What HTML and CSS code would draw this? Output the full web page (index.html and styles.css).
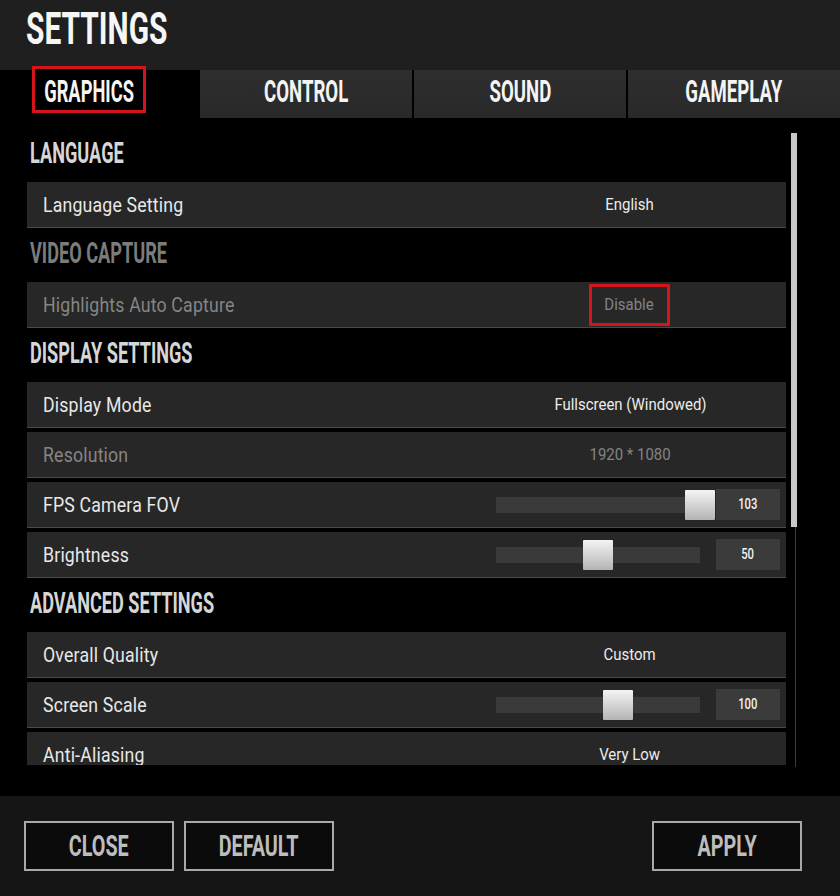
FILE: index.html
```html
<!DOCTYPE html>
<html lang="en">
<head>
<meta charset="utf-8">
<title>Settings</title>
<link rel="stylesheet" href="styles.css">
</head>
<body>
<div class="app">
  <header class="topbar">
    <h1 class="title"><span class="cond">SETTINGS</span></h1>
  </header>

  <nav class="tabs">
    <div class="tab-slot">
      <div class="tab-active"><span class="cond">GRAPHICS</span></div>
    </div>
    <div class="tab"><span class="cond">CONTROL</span></div>
    <div class="tab"><span class="cond">SOUND</span></div>
    <div class="tab"><span class="cond">GAMEPLAY</span></div>
  </nav>

  <main class="content">
    <div class="list">
      <section class="section">
        <h2 class="sec-title"><span class="cond">LANGUAGE</span></h2>
        <div class="row">
          <span class="label"><span class="label-text">Language Setting</span></span>
          <span class="value"><span class="val-text">English</span></span>
        </div>
      </section>

      <section class="section disabled">
        <h2 class="sec-title"><span class="cond">VIDEO CAPTURE</span></h2>
        <div class="row">
          <span class="label"><span class="label-text">Highlights Auto Capture</span></span>
          <span class="value"><span class="highlight"><span class="val-text">Disable</span></span></span>
        </div>
      </section>

      <section class="section">
        <h2 class="sec-title"><span class="cond">DISPLAY SETTINGS</span></h2>
        <div class="row">
          <span class="label"><span class="label-text">Display Mode</span></span>
          <span class="value"><span class="val-text">Fullscreen (Windowed)</span></span>
        </div>
        <div class="row disabled">
          <span class="label"><span class="label-text">Resolution</span></span>
          <span class="value"><span class="val-text">1920 * 1080</span></span>
        </div>
        <div class="row">
          <span class="label"><span class="label-text">FPS Camera FOV</span></span>
          <span class="value slider">
            <span class="track"><span class="thumb" style="left:100%"></span></span>
            <span class="num"><span class="num-text">103</span></span>
          </span>
        </div>
        <div class="row">
          <span class="label"><span class="label-text">Brightness</span></span>
          <span class="value slider">
            <span class="track"><span class="thumb" style="left:50%"></span></span>
            <span class="num"><span class="num-text">50</span></span>
          </span>
        </div>
      </section>

      <section class="section">
        <h2 class="sec-title"><span class="cond">ADVANCED SETTINGS</span></h2>
        <div class="row">
          <span class="label"><span class="label-text">Overall Quality</span></span>
          <span class="value"><span class="val-text">Custom</span></span>
        </div>
        <div class="row">
          <span class="label"><span class="label-text">Screen Scale</span></span>
          <span class="value slider">
            <span class="track"><span class="thumb" style="left:60%"></span></span>
            <span class="num"><span class="num-text">100</span></span>
          </span>
        </div>
        <div class="row">
          <span class="label"><span class="label-text">Anti-Aliasing</span></span>
          <span class="value"><span class="val-text">Very Low</span></span>
        </div>
      </section>
    </div>

    <div class="scrollbar">
      <div class="scroll-thumb"></div>
      <div class="scroll-track"></div>
    </div>
  </main>

  <footer class="footer">
    <button class="btn"><span class="cond">CLOSE</span></button>
    <button class="btn"><span class="cond">DEFAULT</span></button>
    <button class="btn btn-apply"><span class="cond">APPLY</span></button>
  </footer>
</div>
</body>
</html>
```

FILE: styles.css
```css
* { box-sizing: border-box; }

html, body {
  margin: 0;
  padding: 0;
  background: #000;
}

body {
  width: 840px;
  height: 896px;
  overflow: hidden;
  font-family: Roboto, "Liberation Sans", sans-serif;
  color: #e6e6e6;
}

.app {
  display: flex;
  flex-direction: column;
  height: 896px;
}

.cond {
  display: inline-block;
  font-family: Roboto, "Liberation Sans", sans-serif;
  font-weight: 700;
  transform: scaleX(0.6);
  white-space: nowrap;
}

/* ---------- top bar ---------- */
.topbar {
  height: 70px;
  background: #1f1f1f;
  padding: 7px 0 0 26px;
}

.title {
  margin: 0;
  font-size: 44px;
  line-height: 44px;
  color: #f6f6f6;
  font-weight: 700;
}

.title .cond {
  transform-origin: left center;
  transform: scaleX(0.68);
}

/* ---------- tabs ---------- */
.tabs {
  height: 48px;
  display: grid;
  grid-template-columns: 198px repeat(3, 1fr);
  gap: 2px;
  background: #000;
}

.tab-slot {
  padding-left: 32px;
}

.tab-active {
  width: 114px;
  height: 47px;
  margin-top: -4px;
  border: 3px solid #d4161b;
  background: #000;
  display: flex;
  justify-content: center;
  font-size: 31px;
  line-height: 31px;
  padding-top: 7px;
  color: #f6f6f6;
}

.tab-active .cond { transform: scaleX(0.59); }

.tab {
  background: linear-gradient(#2e2e2e, #292929);
  display: flex;
  justify-content: center;
  font-size: 31px;
  line-height: 31px;
  padding-top: 6px;
  color: #f4f4f4;
}

/* ---------- content ---------- */
.content {
  flex: 1;
  display: flex;
  padding-top: 14px;
  background: #000;
}

.list {
  width: 759px;
  height: 633px;
  margin-left: 27px;
  overflow: hidden;
  display: flex;
  flex-direction: column;
  gap: 4px;
}

.section {
  display: flex;
  flex-direction: column;
  gap: 4px;
}

.sec-title {
  margin: 0 0 -4px 0;
  height: 50px;
  padding: 6px 0 0 3px;
  font-size: 29.5px;
  line-height: 30px;
  color: #d6d6d6;
}

.sec-title .cond {
  transform-origin: left center;
  transform: scaleX(0.615);
}

.section.disabled .sec-title { color: #7c7c7c; }

.row {
  flex: none;
  height: 46px;
  background: #272727;
  border-bottom: 1px solid #4b4b4b;
  display: grid;
  grid-template-columns: 1fr 312px;
  align-items: center;
  padding-left: 16px;
}

.label {
  font-size: 20px;
  line-height: 20px;
  color: #e8e8e8;
}

.label-text {
  display: inline-block;
  transform: scaleX(0.885);
  transform-origin: left center;
  white-space: nowrap;
  letter-spacing: 0.2px;
}

.value {
  text-align: center;
  font-size: 17px;
  line-height: 17px;
  color: #ececec;
}

.val-text {
  display: inline-block;
  transform: scaleX(0.88);
  white-space: nowrap;
}

.disabled .label,
.row.disabled .label { color: #858585; }
.disabled .value,
.row.disabled .value { color: #838383; }

.highlight {
  display: inline-flex;
  align-items: center;
  justify-content: center;
  width: 81px;
  height: 42px;
  border: 3px solid #d4161b;
  margin-left: -1px;
}

/* slider */
.slider {
  display: flex;
  align-items: center;
  justify-content: flex-end;
  gap: 16px;
  padding-right: 6px;
}

.track {
  position: relative;
  width: 204px;
  height: 16px;
  background: #3a3a3a;
}

.thumb {
  position: absolute;
  top: -7px;
  width: 30px;
  height: 30px;
  margin-left: -15px;
  background: linear-gradient(#f4f4f4, #b4b4b4);
  border-radius: 1px;
}

.num {
  width: 64px;
  height: 31px;
  background: #3b3b3b;
  display: flex;
  align-items: center;
  justify-content: center;
  font-size: 15px;
  color: #f2f2f2;
}

.num-text {
  display: inline-block;
  transform: scaleX(0.75);
  font-weight: 500;
}

/* scrollbar */
.scrollbar {
  width: 6px;
  margin-left: 5px;
  margin-top: 1px;
  height: 634px;
  display: flex;
  flex-direction: column;
}

.scroll-thumb {
  height: 394px;
  background: #c8c8c8;
}

.scroll-track {
  flex: 1;
  width: 5px;
  border-right: 1px solid #3c3c3c;
}

/* ---------- footer ---------- */
.footer {
  height: 100px;
  background: #151515;
  display: flex;
  align-items: flex-start;
  gap: 10px;
  padding: 25px 38px 0 24px;
}

.btn {
  width: 150px;
  height: 50px;
  border: 2px solid #a9a9a9;
  background: #0b0b0b;
  color: #bdbdbd;
  font-size: 29.5px;
  line-height: 30px;
  padding: 8px 0 0 0;
  display: flex;
  justify-content: center;
  align-items: flex-start;
  font-family: Roboto, "Liberation Sans", sans-serif;
}

.btn .cond { transform: scaleX(0.67); }

.btn-apply { margin-left: auto; }
```
